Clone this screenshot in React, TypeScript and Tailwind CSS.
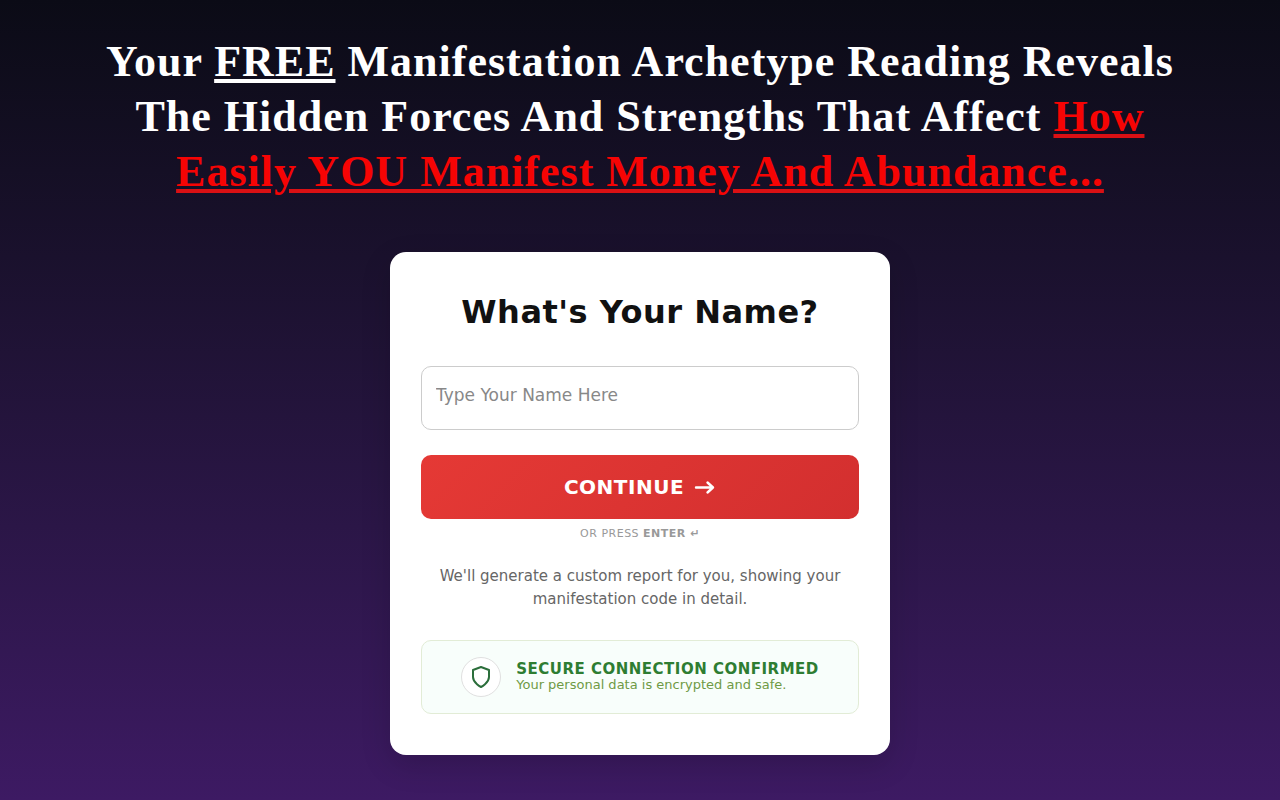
export default function App() {
  return (
    <div className="flex min-h-screen flex-col items-center bg-linear-to-b from-[#0b0b16] to-[#3d1a63] px-20 pt-[34px] pb-11 font-['DejaVu_Sans',sans-serif]">
      <h1 className="max-w-[1100px] text-center font-['Liberation_Serif',serif] text-[44px]/[55px] font-bold tracking-[1px] text-white">
        Your <u className="decoration-4 underline-offset-3">FREE</u> Manifestation Archetype Reading Reveals The Hidden Forces And Strengths That Affect{' '}
        <u className="text-[#f60404] decoration-[#da1014] decoration-4 underline-offset-3">How Easily YOU Manifest Money And Abundance...</u>
      </h1>
      <form className="mt-[53px] flex w-full max-w-[500px] flex-col rounded-2xl bg-white px-[31px] pt-9 pb-[41px] text-center shadow-[0_10px_30px_rgba(0,0,0,0.15)]" onSubmit={(e) => e.preventDefault()}>
        <label htmlFor="name" className="text-[32px]/[48px] font-bold tracking-[0.5px] text-[#111]">What's Your Name?</label>
        <input id="name" type="text" placeholder="Type Your Name Here" className="mt-[30px] h-16 rounded-[10px] border border-[#ccc] px-3.5 pb-1.5 text-[17px] placeholder:text-[#888]" />
        <button type="submit" className="mt-[25px] flex h-16 items-center justify-center gap-2 rounded-[10px] bg-linear-135 from-[#e53935] to-[#d32f2f] text-xl font-bold tracking-[0.5px] text-white">
          CONTINUE
          <svg className="size-6" viewBox="0 0 24 24" fill="none" stroke="currentColor" strokeWidth="2.4" strokeLinecap="round" strokeLinejoin="round" aria-hidden="true"><path d="M4 12.5h17M15.5 7.5l5.5 5-5.5 5" /></svg>
        </button>
        <p className="mt-1.5 text-[11px]/[18px] tracking-[0.5px] text-[#999]">OR PRESS <b>ENTER ↵</b></p>
        <p className="mt-[22px] text-[15px]/[23px] text-[#666]">We'll generate a custom report for you, showing your manifestation code in detail.</p>
        <div className="mt-[29px] flex min-h-[74px] items-center justify-center gap-[15px] rounded-[10px] border border-[#e2ecd6] bg-[#f8fefb] text-left">
          <span className="flex size-10 items-center justify-center rounded-full border border-[#e0e0e0] bg-white">
            <svg className="size-6" viewBox="0 0 24 24" fill="none" stroke="#2b6e3b" strokeWidth="2" strokeLinejoin="round"><path d="M12 22s8-4 8-10V5l-8-3-8 3v7c0 6 8 10 8 10z" /></svg>
          </span>
          <div>
            <p className="text-[15px]/4 font-bold tracking-[0.5px] text-[#2e7d32]">SECURE CONNECTION CONFIRMED</p>
            <p className="text-[13px]/4 text-[#6f9a45]">Your personal data is encrypted and safe.</p>
          </div>
        </div>
      </form>
    </div>
  )
}
